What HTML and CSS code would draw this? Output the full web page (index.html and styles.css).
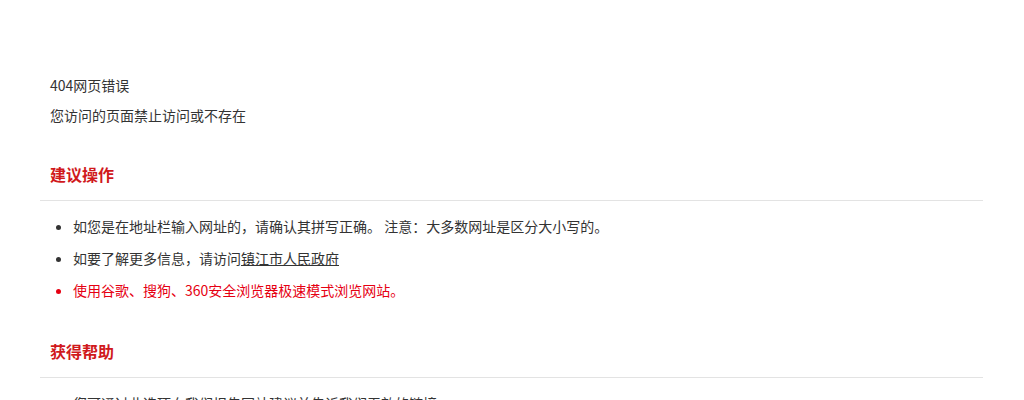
FILE: index.html
```html
<!DOCTYPE html>
<html lang="zh-CN">
<head>
<meta charset="utf-8">
<title>404网页错误</title>
<link rel="stylesheet" href="styles.css">
</head>
<body>
<div class="page">
  <div class="intro">
    <p>404网页错误</p>
    <p>您访问的页面禁止访问或不存在</p>
  </div>
  <h2 class="section-title">建议操作</h2>
  <ul class="tips">
    <li>如您是在地址栏输入网址的，请确认其拼写正确。 注意：大多数网址是区分大小写的。</li>
    <li>如要了解更多信息，请访问<a href="#">镇江市人民政府</a></li>
    <li class="warn">使用谷歌、搜狗、360安全浏览器极速模式浏览网站。</li>
  </ul>
  <h2 class="section-title">获得帮助</h2>
  <ul class="tips">
    <li>您可通过此选项向我们报告网站建议并告诉我们无效的链接</li>
  </ul>
</div>
</body>
</html>
```
FILE: styles.css
```css
html, body {
  margin: 0;
  padding: 0;
  background: #fff;
}
body {
  font-family: "Noto Sans CJK SC", "Noto Sans", sans-serif;
  font-size: 14px;
  color: #333;
}
.page {
  padding: 70px 41px 0 40px;
}
.intro {
  padding-left: 10px;
}
.intro p {
  margin: 0;
  line-height: 30px;
}
.section-title {
  margin: 29px 0 0;
  padding: 0 0 11px 10px;
  font-size: 16px;
  font-weight: bold;
  line-height: 30px;
  color: #d0191c;
  border-bottom: 1px solid #e3e3e3;
}
.tips {
  margin: 0;
  padding: 9px 0 1px 33px;
  list-style: disc;
}
.tips li {
  line-height: 32px;
}
.tips a {
  color: #333;
  text-decoration: underline;
}
.tips .warn {
  color: #e60012;
}
```
